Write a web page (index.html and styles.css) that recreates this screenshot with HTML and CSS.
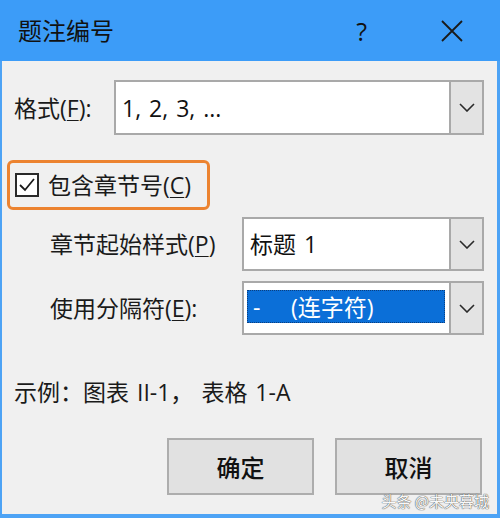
FILE: index.html
```html
<!DOCTYPE html>
<html lang="zh">
<head>
<meta charset="utf-8">
<link rel="stylesheet" href="styles.css">
</head>
<body>
<div class="dialog">
  <div class="titlebar">
    <span class="title">题注编号</span>
    <span class="help">?</span>
    <span class="close"><svg width="22" height="22" viewBox="0 0 22 22"><path d="M1 1 L21 21 M21 1 L1 21" stroke="#1a1a1a" stroke-width="1.8" fill="none"/></svg></span>
  </div>
  <div class="body">
    <div class="row row-format">
      <span class="lbl lbl-format">格式(<u>F</u>):</span>
      <div class="combo">
        <div class="combo-text">1, 2, 3, ...</div>
        <div class="combo-btn"><svg width="16" height="9" viewBox="0 0 16 9"><path d="M1 1 L8 8 L15 1" stroke="#2a2a2a" stroke-width="1.6" fill="none"/></svg></div>
      </div>
    </div>
    <div class="chapter-check">
      <span class="checkbox"><svg width="20" height="20" viewBox="0 0 20 20"><path d="M3 10 L8 15 L17 4" stroke="#1a1a1a" stroke-width="1.8" fill="none"/></svg></span>
      <span class="check-text">包含章节号(<u>C</u>)</span>
    </div>
    <div class="row row-sub row-style">
      <span class="lbl lbl-sub">章节起始样式(<u>P</u>)</span>
      <div class="combo">
        <div class="combo-text">标题 1</div>
        <div class="combo-btn"><svg width="16" height="9" viewBox="0 0 16 9"><path d="M1 1 L8 8 L15 1" stroke="#2a2a2a" stroke-width="1.6" fill="none"/></svg></div>
      </div>
    </div>
    <div class="row row-sub row-sep">
      <span class="lbl lbl-sub">使用分隔符(<u>E</u>):</span>
      <div class="combo">
        <div class="combo-sel"><span class="dash">-</span><span>(连字符)</span></div>
        <div class="combo-btn"><svg width="16" height="9" viewBox="0 0 16 9"><path d="M1 1 L8 8 L15 1" stroke="#2a2a2a" stroke-width="1.6" fill="none"/></svg></div>
      </div>
    </div>
    <div class="example">示例：图表 II-1，<span class="ex-gap">表格 1-A</span></div>
    <div class="buttons">
      <button class="btn">确定</button>
      <button class="btn btn-cancel">取消</button>
    </div>
  </div>
  <div class="watermark">头条 @未央暮城</div>
</div>
</body>
</html>
```
FILE: styles.css
```css
* { box-sizing: border-box; }
html, body { margin: 0; padding: 0; }
body {
  width: 500px;
  height: 518px;
  overflow: hidden;
  font-family: "Open Sans", "Noto Sans CJK SC", sans-serif;
  color: #1a1a1a;
}
.dialog {
  position: relative;
  width: 500px;
  height: 518px;
  background: #f0f0f0;
  border-left: 2px solid #4da3f5;
  border-right: 3px solid #4da3f5;
  border-bottom: 4px solid #4da3f5;
  display: flex;
  flex-direction: column;
}
.titlebar {
  height: 61px;
  background: #3c9cf8;
  margin: 0 -3px 0 -2px;
  display: flex;
  align-items: center;
  padding-left: 18px;
  flex-shrink: 0;
}
.title {
  font-size: 24px;
  line-height: 30px;
  color: #111;
  flex: 1;
}
.help {
  font-size: 25px;
  line-height: 30px;
  color: #111;
  margin-right: 74px;
}
.close {
  display: flex;
  width: 22px;
  height: 22px;
  margin-right: 37px;
}
.body {
  padding: 0 13px 0 12px;
  flex: 1;
}
.row {
  display: flex;
  align-items: center;
}
.lbl {
  font-size: 23px;
  line-height: 30px;
  white-space: nowrap;
}
.lbl u, .check-text u { text-decoration-thickness: 1px; text-underline-offset: 3px; }
.row-format {
  margin-top: 19px;
  height: 55px;
}
.lbl-format { width: 100px; flex-shrink: 0; }
.combo {
  flex: 1;
  height: 100%;
  display: flex;
  border: 2px solid #a9a9a9;
  background: #fff;
}
.combo-text {
  flex: 1;
  font-size: 23px;
  line-height: 30px;
  padding-left: 6px;
  display: flex;
  align-items: center;
  color: #111;
  word-spacing: 2px;
}
.combo-btn {
  width: 33px;
  background: #e3e3e3;
  border-left: 2px solid #a9a9a9;
  display: flex;
  align-items: center;
  justify-content: center;
}
.chapter-check {
  margin-top: 25px;
  margin-left: -7px;
  height: 50px;
  width: 203px;
  border: 3px solid #ec8330;
  border-radius: 6px;
  display: flex;
  align-items: center;
  padding-left: 5px;
}
.checkbox {
  width: 24px;
  height: 24px;
  border: 2px solid #2a2a2a;
  background: #fff;
  display: flex;
  align-items: center;
  justify-content: center;
  flex-shrink: 0;
}
.check-text {
  margin-left: 9px;
  font-size: 23px;
  line-height: 30px;
  white-space: nowrap;
}
.row-sub { height: 54px; }
.row-style { margin-top: 7px; }
.row-sep { margin-top: 10px; }
.lbl-sub {
  width: 228px;
  padding-left: 36px;
  flex-shrink: 0;
}
.combo-sel {
  flex: 1;
  margin: 7px 4px 10px 3px;
  background: #0b6fd8;
  outline: 1px dotted #0a3f80;
  outline-offset: -1px;
  color: #fff;
  font-size: 23px;
  line-height: 30px;
  display: flex;
  align-items: center;
  padding-left: 6px;
}
.dash { width: 38px; }
.example {
  margin-top: 42px;
  font-size: 23px;
  line-height: 30px;
  white-space: nowrap;
  word-spacing: 2px;
}
.ex-gap { margin-left: 8px; }
.buttons {
  margin-top: 31px;
  display: flex;
  justify-content: flex-end;
  gap: 21px;
  padding-right: 2px;
}
.btn {
  width: 147px;
  height: 57px;
  background: #e1e1e1;
  border: 2px solid #adadad;
  font-family: "Noto Sans CJK SC", sans-serif;
  font-size: 24px;
  font-weight: 500;
  color: #111;
  padding: 0;
}
.watermark {
  position: absolute;
  right: 8px;
  bottom: 4px;
  font-size: 15px;
  line-height: 18px;
  color: #f8f8f8;
  text-shadow: 0 0 1px #444, 0 0 1px #444;
  font-family: "Noto Sans CJK SC", sans-serif;
}
```
